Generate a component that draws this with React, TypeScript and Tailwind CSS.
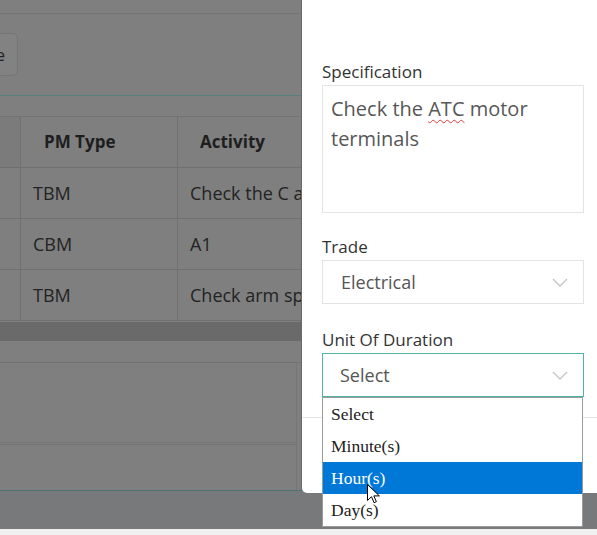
import type { FC } from 'react'

const rows = [
  { type: 'TBM', activity: 'Check the C axis motor' },
  { type: 'CBM', activity: 'A1' },
  { type: 'TBM', activity: 'Check arm spring tension' },
]

const options = ['Select', 'Minute(s)', 'Hour(s)', 'Day(s)']

const Chevron: FC = () => (
  <svg width="16" height="9" viewBox="0 0 16 9" fill="none" stroke="#c4c4c4" strokeWidth="1.3">
    <path d="M1 1l7 7 7-7" />
  </svg>
)

const Cursor: FC = () => (
  <svg width="13" height="20" viewBox="0 0 13 20" className="pointer-events-none absolute left-[44px] top-[22px]">
    <path
      d="M0.5 0.5v16l4-3.8 2.6 6 2.3-1-2.6-5.8h5.6z"
      fill="#fff"
      stroke="#000"
      strokeWidth="1"
      strokeLinejoin="round"
    />
  </svg>
)

const Label: FC<{ children: string }> = ({ children }) => (
  <div className="mb-px text-[17px] leading-[24px] text-[#333]">{children}</div>
)

export default function App() {
  return (
    <div
      className="flex h-[535px] w-[597px] flex-col overflow-hidden"
      style={{ fontFamily: '"Open Sans", "Noto Sans", sans-serif' }}
    >
      <div className="flex h-[529px] bg-[#77797a]">
        {/* dimmed page behind the drawer */}
        <div className="flex h-[491px] w-[302px] shrink-0 flex-col overflow-hidden border-b border-r border-[#4f7572] border-r-[#6a6a6a] bg-[#7f7f7f] text-[#232323]">
          <div className="h-[14px] shrink-0 border-b border-[#747474]" />
          <div className="flex h-[82px] shrink-0 items-center border-b border-[#587f7c]">
            <div className="-ml-[52px] flex h-[43px] w-[70px] items-center justify-end rounded-[5px] border border-[#757575] bg-[#828282] pr-[12px] text-[17px]">
              Save
            </div>
          </div>
          <div className="h-[21px] shrink-0 border-b border-[#737373]" />

          <div className="grid h-[51px] shrink-0 grid-cols-[21px_157px_1fr] border-b border-[#707070] text-[17px] font-bold text-[#1e1e1e]">
            <div className="border-r border-[#707070] bg-[#7b7b7b]" />
            <div className="flex items-center border-r border-[#707070] pl-[23px]">PM Type</div>
            <div className="flex items-center whitespace-nowrap pl-[22px]">Activity</div>
          </div>
          {rows.map((r, i) => (
            <div
              key={i}
              className="grid h-[51px] shrink-0 grid-cols-[21px_157px_1fr] border-b border-[#707070] text-[18px]"
            >
              <div className="border-r border-[#707070]" />
              <div className="flex items-center border-r border-[#707070] pl-[12px]">{r.type}</div>
              <div className="flex items-center whitespace-nowrap pl-[12px]">{r.activity}</div>
            </div>
          ))}

          <div className="mt-px h-[19px] shrink-0 bg-[#6a6a6a]" />
          <div className="h-[22px] shrink-0 border-b border-[#727272]" />
          <div className="mr-[4px] h-[82px] shrink-0 border-b-[3px] border-r border-double border-[#737373] border-r-[#767676]" />
          <div className="mr-[4px] flex-1 border-r border-[#767676]" />
        </div>

        {/* drawer */}
        <div className="flex w-[295px] flex-col">
          <div className="h-[493px] rounded-bl-[5px] bg-white">
            <div className="border-b border-[#e6e6e6] pb-[20px] pl-[20px] pr-[13px] pt-[60px]">
              <Label>Specification</Label>
              <div className="h-[128px] border border-[#e3e3e3] px-[8px] py-[8px] text-[20px] leading-[30px] text-[#575757]">
                Check the{' '}
                <span className="underline decoration-[#e53935] decoration-wavy decoration-1 underline-offset-[3px]">
                  ATC
                </span>{' '}
                motor terminals
              </div>

              <div className="mt-[22px]">
                <Label>Trade</Label>
                <div className="flex h-[44px] items-center justify-between border border-[#e3e3e3] pl-[18px] pr-[15px] text-[18px] text-[#555]">
                  <span>Electrical</span>
                  <Chevron />
                </div>
              </div>

              <div className="mt-[24px]">
                <Label>Unit Of Duration</Label>
                <div className="relative">
                  <div className="flex h-[44px] items-center justify-between border border-[#4fb3ab] pl-[17px] pr-[15px] text-[18px] text-[#555]">
                    <span>Select</span>
                    <Chevron />
                  </div>
                  {/* native option list */}
                  <div
                    className="absolute left-0 top-full z-10 w-[261px] border border-[#9a9a9a] bg-white text-[17.5px] text-[#222]"
                    style={{ fontFamily: '"Liberation Serif", "Times New Roman", serif' }}
                  >
                    {options.map(o => (
                      <div
                        key={o}
                        className={
                          o === 'Hour(s)'
                            ? 'relative flex h-[32px] items-center bg-[#0078d7] pl-[8px] text-white'
                            : 'flex h-[32px] items-center pl-[8px]'
                        }
                      >
                        {o}
                        {o === 'Hour(s)' && <Cursor />}
                      </div>
                    ))}
                  </div>
                </div>
              </div>
            </div>
          </div>
        </div>
      </div>
      <div className="flex-1 bg-[#f0f0f0]" />
    </div>
  )
}
